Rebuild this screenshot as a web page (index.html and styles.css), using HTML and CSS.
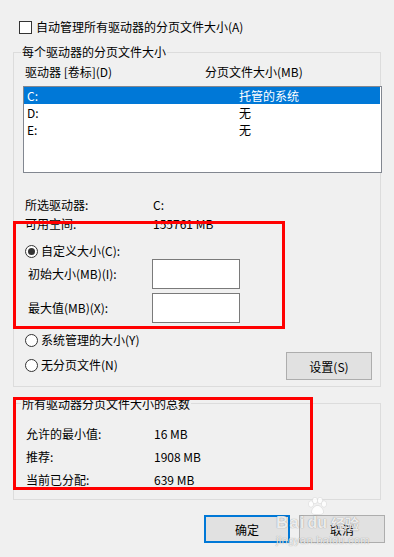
FILE: index.html
```html
<!DOCTYPE html>
<html lang="zh-CN">
<head>
    <meta charset="UTF-8">
    <meta name="viewport" content="width=device-width, initial-scale=1.0">
    <title>虚拟内存</title>
    <link rel="stylesheet" href="styles.css">
</head>
<body>
    <div class="dialog">
        <label class="check-row">
            <span class="checkbox"></span>
            <span>自动管理所有驱动器的分页文件大小(A)</span>
        </label>

        <div class="group group-drives">
            <div class="group-title">每个驱动器的分页文件大小</div>
            <div class="list-head">
                <span class="head-drive">驱动器 [卷标](D)</span>
                <span>分页文件大小(MB)</span>
            </div>
            <div class="listbox">
                <div class="list-row selected"><span class="col-drive">C:</span><span>托管的系统</span></div>
                <div class="list-row"><span class="col-drive">D:</span><span>无</span></div>
                <div class="list-row"><span class="col-drive">E:</span><span>无</span></div>
            </div>

            <div class="info">
                <div class="info-row"><span class="info-label">所选驱动器:</span><span>C:</span></div>
                <div class="info-row"><span class="info-label">可用空间:</span><span>155761 MB</span></div>
            </div>

            <label class="radio-row radio-custom">
                <span class="radio checked"></span>
                <span>自定义大小(C):</span>
            </label>
            <div class="size-fields">
                <div class="field-row">
                    <span class="field-label">初始大小(MB)(I):</span>
                    <input type="text" class="field-input">
                </div>
                <div class="field-row">
                    <span class="field-label">最大值(MB)(X):</span>
                    <input type="text" class="field-input">
                </div>
            </div>

            <div class="bottom-row">
                <div class="radio-list">
                    <label class="radio-row">
                        <span class="radio"></span>
                        <span>系统管理的大小(Y)</span>
                    </label>
                    <label class="radio-row">
                        <span class="radio"></span>
                        <span>无分页文件(N)</span>
                    </label>
                </div>
                <button class="btn btn-set">设置(S)</button>
            </div>
        </div>

        <div class="group group-total">
            <div class="group-title">所有驱动器分页文件大小的总数</div>
            <div class="totals">
                <div class="info-row"><span class="total-label">允许的最小值:</span><span>16 MB</span></div>
                <div class="info-row"><span class="total-label">推荐:</span><span>1908 MB</span></div>
                <div class="info-row"><span class="total-label">当前已分配:</span><span>639 MB</span></div>
            </div>
        </div>

        <div class="buttons">
            <button class="btn btn-default">确定</button>
            <button class="btn">取消</button>
        </div>
    </div>

    <!-- красные рамки-пометки поверх скриншота -->
    <div class="mark mark-custom"></div>
    <div class="mark mark-total"></div>

    <div class="watermark">
        <div class="wm-top">
            <span class="wm-bai">Bai</span>
            <span class="wm-du">
                <svg class="wm-paw" width="20" height="18" viewBox="0 0 20 18">
                    <ellipse cx="4" cy="7" rx="2.6" ry="3.2"/>
                    <ellipse cx="8" cy="3.5" rx="2.6" ry="3.2"/>
                    <ellipse cx="13" cy="3.5" rx="2.6" ry="3.2"/>
                    <ellipse cx="17" cy="7" rx="2.6" ry="3.2"/>
                    <path d="M10.5 8.5c-3 0-6 4-6 6.5 0 2 2 2.5 6 2.5s6-.5 6-2.5c0-2.5-3-6.5-6-6.5z"/>
                </svg>
                du
            </span>
            <span class="wm-jy">经验</span>
        </div>
        <div class="wm-url">jingyan.baidu.com</div>
    </div>
</body>
</html>
```

FILE: styles.css
```css
body {
    margin: 0;
    position: relative;
    width: 394px;
    height: 557px;
    overflow: hidden;
    background-color: #f0f0f0;
    color: #000;
    font-family: "Noto Sans CJK SC", "Noto Sans", sans-serif;
    font-size: 12px;
    line-height: 16px;
}

.dialog {
    padding: 19px 13px 0 13px;
}

.check-row {
    display: flex;
    align-items: center;
    gap: 4px;
    height: 16px;
    margin-left: 6px;
}

.checkbox {
    width: 13px;
    height: 13px;
    box-sizing: border-box;
    border: 1px solid #333;
    background-color: #fff;
}

/* group boxes */
.group {
    box-sizing: border-box;
    border: 1px solid #dcdcdc;
}

.group-title {
    width: fit-content;
    height: 16px;
    margin-left: 7px;
    padding: 0 1px;
    background-color: #f0f0f0;
}

.group-drives {
    height: 335px;
    margin-top: 17px;
}

.group-drives > .group-title {
    margin-top: -9px;
}

.list-head {
    display: flex;
    height: 16px;
    margin-top: 4px;
    padding-left: 11px;
}

.head-drive {
    width: 180px;
}

.listbox {
    box-sizing: border-box;
    width: 359px;
    height: 87px;
    margin: 6px 0 0 9px;
    padding-right: 1px;
    border: 1px solid #828790;
    background-color: #fff;
}

.list-row {
    display: flex;
    height: 17px;
    line-height: 17px;
    padding-left: 3px;
}

.list-row.selected {
    background-color: #0078d7;
    color: #fff;
}

.col-drive {
    width: 212px;
}

.info {
    display: flex;
    flex-direction: column;
    gap: 3px;
    margin-top: 24px;
    padding-left: 11px;
}

.info-row {
    display: flex;
    height: 16px;
}

.info-label {
    width: 128px;
}

.radio-row {
    display: flex;
    align-items: center;
    gap: 3px;
    height: 16px;
    padding-left: 11px;
}

.radio-custom {
    margin-top: 11px;
}

.radio {
    position: relative;
    width: 13px;
    height: 13px;
    box-sizing: border-box;
    border: 1px solid #333;
    border-radius: 50%;
    background-color: #fff;
}

.radio.checked::after {
    content: "";
    position: absolute;
    left: 2px;
    top: 2px;
    width: 7px;
    height: 7px;
    border-radius: 50%;
    background-color: #333;
}

.size-fields {
    display: flex;
    flex-direction: column;
    gap: 4px;
}

.field-row {
    display: flex;
    align-items: center;
    padding-left: 14px;
}

.field-label {
    width: 124px;
}

.field-input {
    box-sizing: border-box;
    width: 88px;
    height: 30px;
    margin: 0;
    border: 1px solid #7a7a7a;
    background-color: #fff;
    outline: none;
}

.bottom-row {
    display: flex;
    justify-content: space-between;
    align-items: flex-start;
    margin-top: 9px;
    padding-right: 8px;
}

.radio-list {
    display: flex;
    flex-direction: column;
    gap: 9px;
}

.btn {
    box-sizing: border-box;
    width: 86px;
    height: 28px;
    margin: 0;
    padding: 0;
    border: 1px solid #adadad;
    background-color: #e1e1e1;
    color: #000;
    font-family: inherit;
    font-size: 12px;
}

.btn-set {
    margin-top: 20px;
}

.btn-default {
    border: 2px solid #0078d7;
}

.group-total {
    height: 97px;
    margin-top: 16px;
}

.group-total > .group-title {
    margin-top: -8px;
}

.totals {
    display: flex;
    flex-direction: column;
    gap: 7px;
    margin-top: 14px;
    padding-left: 12px;
}

.total-label {
    width: 128px;
}

.buttons {
    display: flex;
    justify-content: flex-end;
    gap: 9px;
    margin: 15px -4px 0 0;
}

/* annotation frames */
.mark {
    position: absolute;
    box-sizing: border-box;
    border: 3px solid #ff0000;
}

.mark-custom {
    left: 13px;
    top: 221px;
    width: 272px;
    height: 108px;
}

.mark-total {
    left: 13px;
    top: 397px;
    width: 300px;
    height: 93px;
}

/* baidu watermark */
.watermark {
    position: absolute;
    left: 276px;
    top: 510px;
    color: rgba(255, 255, 255, 0.85);
    text-shadow: 0 0 1px rgba(0, 0, 0, 0.45);
    font-family: "Liberation Sans", sans-serif;
    pointer-events: none;
}

.wm-top {
    display: flex;
    align-items: flex-end;
    height: 22px;
}

.wm-bai {
    font-size: 17px;
    font-weight: bold;
    line-height: 18px;
    letter-spacing: 1px;
}

.wm-du {
    position: relative;
    margin-left: 2px;
    font-size: 16px;
    font-weight: bold;
    line-height: 18px;
}

.wm-paw {
    position: absolute;
    left: 0;
    top: -17px;
    fill: rgba(255, 255, 255, 0.85);
    stroke: rgba(0, 0, 0, 0.12);
    stroke-width: 0.6;
}

.wm-jy {
    margin-left: 4px;
    font-family: "Noto Sans CJK SC", sans-serif;
    font-size: 14px;
    font-weight: bold;
    line-height: 18px;
}

.wm-url {
    margin-top: 2px;
    font-size: 11px;
    line-height: 12px;
    letter-spacing: 0.3px;
}
```
